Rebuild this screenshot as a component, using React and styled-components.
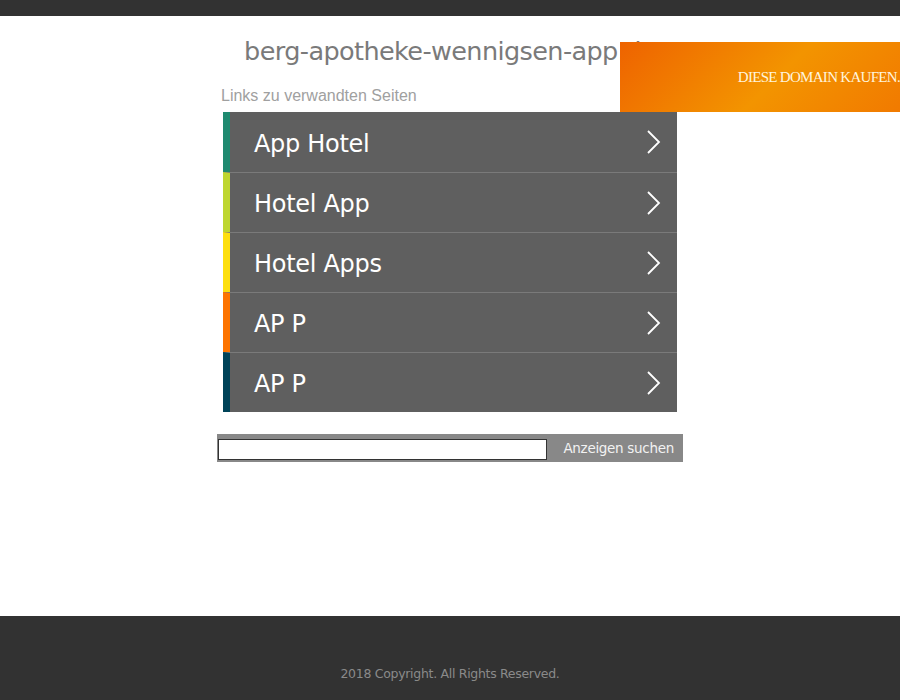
import React from "react";
import styled, { createGlobalStyle } from "styled-components";

const GlobalStyle = createGlobalStyle`
  html, body {
    margin: 0;
    padding: 0;
    background: #fff;
  }
  body {
    font-family: "Liberation Sans", Arial, sans-serif;
  }
`;

const links = [
  { label: "App Hotel", color: "#1f8a70" },
  { label: "Hotel App", color: "#bed630" },
  { label: "Hotel Apps", color: "#fddf0f" },
  { label: "AP P", color: "#fd7400" },
  { label: "AP P", color: "#004358" },
];

const Chevron = () => (
  <svg width="18" height="26" viewBox="0 0 18 26" fill="none">
    <path d="M3 2 L14 13 L3 24" stroke="#fff" strokeWidth="1.8" />
  </svg>
);

const App = () => {
  return (
    <Page>
      <GlobalStyle />
      <TopBar />
      <Main>
        <Title>berg-apotheke-wennigsen-app.de</Title>
        <BuyBanner>
          <BuyText>DIESE DOMAIN KAUFEN.</BuyText>
        </BuyBanner>
        <Content>
          <Caption>Links zu verwandten Seiten</Caption>
          <List>
            {links.map((l, i) => (
              <Row key={i} $accent={l.color}>
                <RowLabel>{l.label}</RowLabel>
                <Chevron />
              </Row>
            ))}
          </List>
          <Search>
            <SearchInput type="text" />
            <SearchButton>Anzeigen suchen</SearchButton>
          </Search>
        </Content>
      </Main>
      <Footer>2018 Copyright. All Rights Reserved.</Footer>
    </Page>
  );
};

const Page = styled.div`
  display: flex;
  flex-direction: column;
  width: 900px;
  height: 700px;
  overflow: hidden;
`;

const TopBar = styled.div`
  height: 16px;
  background: #323232;
  flex-shrink: 0;
`;

const Main = styled.main`
  position: relative;
  flex: 1;
  display: flex;
  flex-direction: column;
  align-items: center;
  overflow: hidden;
`;

const Title = styled.h1`
  margin: 18px 0 0;
  font-family: "DejaVu Sans", sans-serif;
  font-weight: 400;
  font-size: 25.5px;
  line-height: 34px;
  letter-spacing: -0.6px;
  color: #7a7a7a;
  white-space: nowrap;
`;

const BuyBanner = styled.div`
  position: absolute;
  top: 26px;
  left: 620px;
  width: 280px;
  height: 70px;
  display: flex;
  align-items: center;
  justify-content: flex-end;
  overflow: hidden;
  background: linear-gradient(135deg, #ee6300 0%, #f39400 55%, #f17a00 100%);
`;

const BuyText = styled.span`
  color: #fff4dc;
  font-family: "Liberation Serif", serif;
  font-size: 15px;
  letter-spacing: -0.7px;
  white-space: nowrap;
`;

const Content = styled.div`
  width: 466px;
  display: flex;
  flex-direction: column;
  margin-top: 18px;
`;

const Caption = styled.div`
  padding-left: 4px;
  font-size: 16px;
  line-height: 20px;
  color: #a0a0a0;
  margin-bottom: 6px;
`;

const List = styled.div`
  display: flex;
  flex-direction: column;
  margin: 0 6px;
`;

const Row = styled.a`
  display: flex;
  align-items: center;
  justify-content: space-between;
  height: 60px;
  box-sizing: border-box;
  padding: 0 14px 0 24px;
  background: #5f5f5f;
  border-left: 7px solid ${(p) => p.$accent};
  border-top: 1px solid #7a7a7a;
  cursor: pointer;
  &:first-child {
    border-top: none;
  }
`;

const RowLabel = styled.span`
  padding-top: 3px;
  font-family: "DejaVu Sans", sans-serif;
  font-size: 24px;
  letter-spacing: -0.3px;
  color: #fff;
`;

const Search = styled.form`
  display: flex;
  align-items: center;
  margin-top: 22px;
  height: 28px;
  background: #888;
  padding: 0 1px;
`;

const SearchInput = styled.input`
  width: 329px;
  height: 21px;
  box-sizing: border-box;
  margin: 2px 0 0;
  border: 1px solid #333;
  background: #fff;
  outline: none;
`;

const SearchButton = styled.span`
  flex: 1;
  text-align: right;
  padding-right: 8px;
  font-family: "DejaVu Sans", sans-serif;
  font-size: 13.5px;
  letter-spacing: -0.3px;
  color: #f2f2f2;
`;

const Footer = styled.footer`
  height: 84px;
  flex-shrink: 0;
  background: #323232;
  display: flex;
  justify-content: center;
  padding-top: 50px;
  box-sizing: border-box;
  font-family: "DejaVu Sans", sans-serif;
  font-size: 12.5px;
  letter-spacing: -0.3px;
  color: #8a8a8a;
`;

export default App;
